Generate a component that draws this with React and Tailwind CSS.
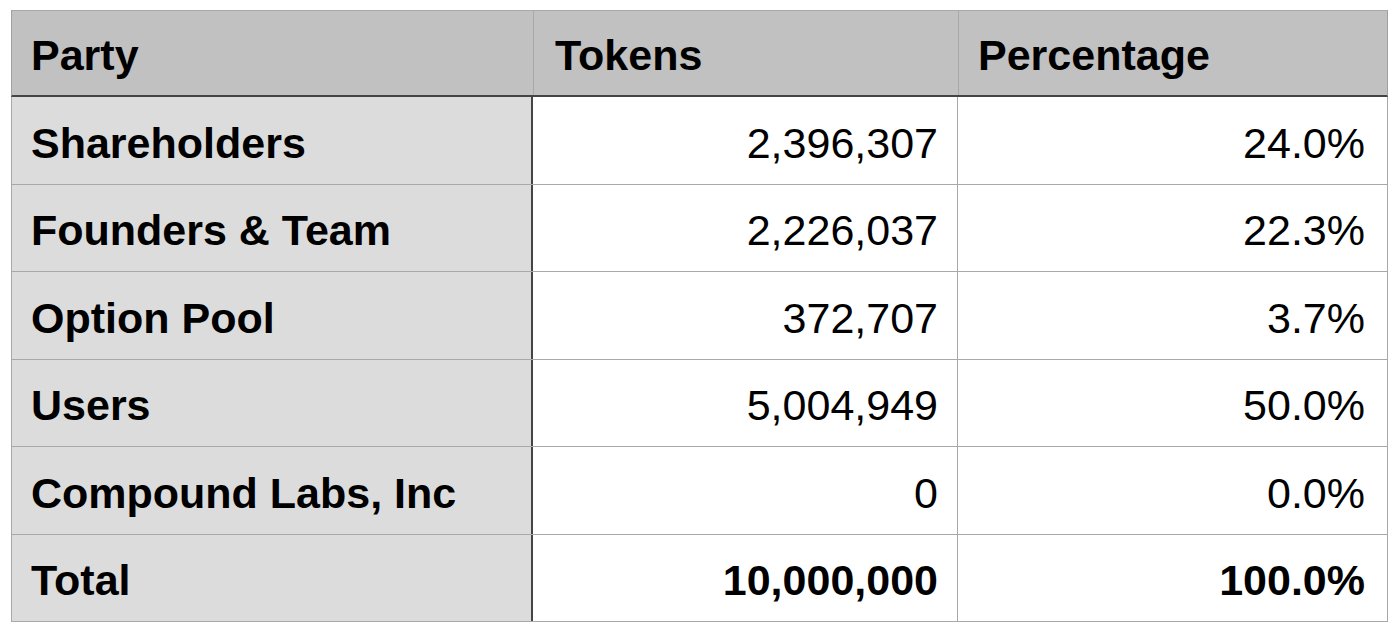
import React from "react";

const rows = [
  ["Shareholders", "2,396,307", "24.0%"],
  ["Founders & Team", "2,226,037", "22.3%"],
  ["Option Pool", "372,707", "3.7%"],
  ["Users", "5,004,949", "50.0%"],
  ["Compound Labs, Inc", "0", "0.0%"],
];

export default function App() {
  return (
    <div
      className="w-[1400px] h-[638px] bg-white pt-[10px] pl-[11px]"
      style={{ fontFamily: '"Liberation Sans", Arial, sans-serif' }}
    >
      <div className="w-[1377px] text-[43px] text-black">
        <div className="flex h-[87px] bg-[#c0c1c0] border-t border-l border-r border-b-2 border-t-[#a8a8a8] border-l-[#a0a0a0] border-r-[#a0a0a0] border-b-[#444] font-bold">
          <div className="w-[522px] shrink-0 border-r border-[#a8a8a8] flex items-center pl-[19px] pt-[4px]">Party</div>
          <div className="w-[425px] shrink-0 border-r border-[#a8a8a8] flex items-center pl-[21px] pt-[4px]">Tokens</div>
          <div className="flex-1 flex items-center pl-[19px] pt-[4px]">Percentage</div>
        </div>
        {rows.map((r) => (
          <div key={r[0]} className="flex h-[87.5px] border-b border-l border-r border-[#a8a8a8]">
            <div className="w-[521px] shrink-0 bg-[#dcdcdc] border-r-2 border-[#444] flex items-center pl-[19px] pt-[5px] font-bold">{r[0]}</div>
            <div className="w-[425px] shrink-0 bg-white border-r border-[#a8a8a8] flex items-center justify-end pr-[19px] pt-[5px]">{r[1]}</div>
            <div className="flex-1 bg-white flex items-center justify-end pr-[22px] pt-[5px]">{r[2]}</div>
          </div>
        ))}
        <div className="flex h-[87.5px] border-b border-l border-r border-[#a8a8a8] font-bold">
          <div className="w-[521px] shrink-0 bg-[#dcdcdc] border-r-2 border-[#444] flex items-center pl-[19px] pt-[5px]">Total</div>
          <div className="w-[425px] shrink-0 bg-white border-r border-[#a8a8a8] flex items-center justify-end pr-[19px] pt-[5px]">10,000,000</div>
          <div className="flex-1 bg-white flex items-center justify-end pr-[22px] pt-[5px]">100.0%</div>
        </div>
      </div>
    </div>
  );
}
